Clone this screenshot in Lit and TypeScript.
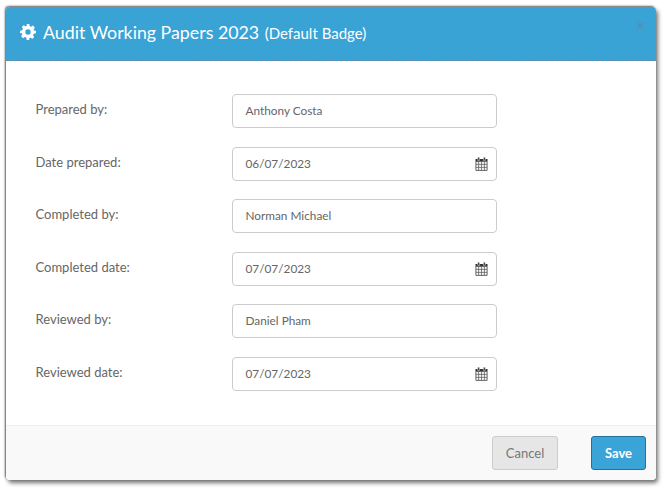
import { LitElement, css, html } from 'lit'
import { customElement } from 'lit/decorators.js'

const fields = [
  { label: 'Prepared by:', value: 'Anthony Costa', date: false },
  { label: 'Date prepared:', value: '06/07/2023', date: true },
  { label: 'Completed by:', value: 'Norman Michael', date: false },
  { label: 'Completed date:', value: '07/07/2023', date: true },
  { label: 'Reviewed by:', value: 'Daniel Pham', date: false },
  { label: 'Reviewed date:', value: '07/07/2023', date: true }
]

const gear = html`<svg class="gear" viewBox="0 0 24 24" width="16" height="16">
  <path fill="#fff" fill-rule="evenodd" d="M10 0h4l.6 3.2c.8.2 1.5.5 2.2.9l2.7-1.8 2.8 2.8-1.8 2.7c.4.7.7 1.4.9 2.2L24 10v4l-3.6.6c-.2.8-.5 1.5-.9 2.2l1.8 2.7-2.8 2.8-2.7-1.8c-.7.4-1.4.7-2.2.9L14 24h-4l-.6-3.6c-.8-.2-1.5-.5-2.2-.9l-2.7 1.8-2.8-2.8 1.8-2.7c-.4-.7-.7-1.4-.9-2.2L0 14v-4l3.6-.6c.2-.8.5-1.5.9-2.2L2.7 4.5l2.8-2.8 2.7 1.8c.7-.4 1.4-.7 2.2-.9zM12 8a4 4 0 1 0 0 8 4 4 0 0 0 0-8z"/>
</svg>`

const calendar = html`<svg class="cal" viewBox="0 0 13 14" width="13" height="14">
  <path fill="#333" d="M.5 2h12v2.5H.5z"/>
  <path fill="#f4f4f4" stroke="#444" stroke-width=".8" d="M.9 4.4h11.2v9H.9z"/>
  <path stroke="#555" stroke-width=".7" fill="none" d="M3.6 4.4v9M6.5 4.4v9M9.4 4.4v9M.9 7.4h11.2M.9 10.4h11.2"/>
  <path fill="#333" stroke="#fff" stroke-width=".5" d="M2.7.2h1.9v3.2H2.7zM8.4.2h1.9v3.2H8.4z"/>
</svg>`

@customElement('app-root')
export class AppRoot extends LitElement {
  static styles = css`
    :host {
      display: block;
      width: 665px;
      height: 489px;
      padding: 7px 9px 9px 6px;
      box-sizing: border-box;
      background: #fff;
      font-family: Lato, "Open Sans", sans-serif;
    }
    .modal {
      height: 473px;
      display: flex;
      flex-direction: column;
      background: #fff;
      border-radius: 4px;
      box-shadow: -1px -1px 2px rgba(0, 0, 0, .6), 2px 3px 4px rgba(0, 0, 0, .55);
      overflow: hidden;
    }
    .head {
      height: 54px;
      flex: none;
      box-sizing: border-box;
      display: flex;
      align-items: center;
      gap: 7px;
      padding: 0 11px 3px 14px;
      background: #39a3d6;
      border-bottom: 1px dashed #6f8a99;
      color: #fff;
    }
    .gear { flex: none; }
    .title { font-size: 17.8px; }
    .title small { font-size: 15px; margin-left: 1px; }
    .close {
      margin-left: auto;
      margin-top: -14px;
      font-size: 15px;
      color: #5a8bab;
    }
    .body {
      flex: 1;
      display: flex;
      flex-direction: column;
      gap: 18.5px;
      padding: 33px 0 0 29.5px;
    }
    .row {
      display: grid;
      grid-template-columns: 196.5px 265px;
      align-items: start;
      height: 34px;
    }
    label {
      font-size: 13px;
      color: #666;
      padding-top: 7px;
    }
    .input {
      height: 34px;
      box-sizing: border-box;
      display: flex;
      align-items: center;
      justify-content: space-between;
      padding: 0 8px 0 12.5px;
      border: 1px solid #ccc;
      border-radius: 4px;
      font-size: 11.8px;
      color: #666;
    }
    .input span { margin-bottom: 1px; }
    .foot {
      height: 55px;
      flex: none;
      box-sizing: border-box;
      display: flex;
      justify-content: flex-end;
      align-items: center;
      gap: 33px;
      padding: 0 10px 0 0;
      background: #f9f9f9;
      border-top: 1px solid #eee;
    }
    button {
      width: 66px;
      height: 34px;
      padding: 0;
      border-radius: 3px;
      font: inherit;
      font-size: 13px;
    }
    .cancel {
      background: #e6e6e6;
      border: 1px solid #ccc;
      color: #777;
    }
    .save {
      width: 55px;
      background: #3aa3d8;
      border: 1px solid #23709b;
      color: #fff;
      font-weight: 700;
    }
  `

  render () {
    return html`
      <div class="modal">
        <div class="head">
          ${gear}
          <span class="title">Audit Working Papers 2023 <small>(Default Badge)</small></span>
          <span class="close">×</span>
        </div>
        <div class="body">
          ${fields.map(f => html`
            <div class="row">
              <label>${f.label}</label>
              <div class="input"><span>${f.value}</span>${f.date ? calendar : ''}</div>
            </div>
          `)}
        </div>
        <div class="foot">
          <button class="cancel">Cancel</button>
          <button class="save">Save</button>
        </div>
      </div>
    `
  }
}
